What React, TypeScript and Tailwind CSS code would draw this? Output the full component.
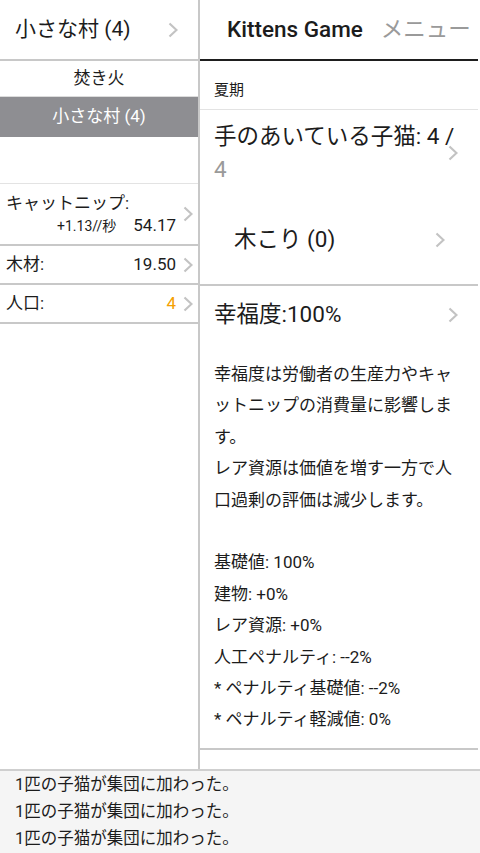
import React from "react";

const Chevron = ({ className = "" }: { className?: string }) => (
  <svg width="10" height="16" viewBox="0 0 10 16" className={"shrink-0 " + className}>
    <path d="M1.5 1.5 L8.5 8 L1.5 14.5" fill="none" stroke="#c3c3c3" strokeWidth="2.2" />
  </svg>
);

const descLines = [
  "幸福度は労働者の生産力やキャ",
  "ットニップの消費量に影響しま",
  "す。",
  "レア資源は価値を増す一方で人",
  "口過剰の評価は減少します。",
  "\u00a0",
  "基礎値: 100%",
  "建物: +0%",
  "レア資源: +0%",
  "人工ペナルティ: --2%",
  "* ペナルティ基礎値: --2%",
  "* ペナルティ軽減値: 0%",
];

export default function App() {
  return (
    <div className="w-[480px] h-[853px] flex flex-col bg-white text-[#1c1c1c] font-['Roboto','Noto_Sans_CJK_JP',sans-serif] overflow-hidden">
      <div className="flex flex-1 min-h-0">
        <aside className="w-[200px] shrink-0 border-r-2 border-[#c8c8c8] flex flex-col">
          <div className="h-[61px] shrink-0 border-b-2 border-[#c8c8c8] flex items-center justify-between pl-[15px] pr-[20px]">
            <span className="text-[21px]">小さな村 (4)</span>
            <Chevron />
          </div>
          <div className="h-[36px] shrink-0 border-b border-[#dcdcdc] flex items-center justify-center text-[17px]">
            焚き火
          </div>
          <div className="h-[40px] shrink-0 bg-[#8e8e92] text-white flex items-center justify-center text-[17px]">
            小さな村 (4)
          </div>
          <div className="h-[47px] shrink-0 border-b border-[#e3e3e3]"></div>
          <div className="h-[62px] shrink-0 border-b-2 border-[#c8c8c8] flex items-center pl-[6px] pr-[5px]">
            <div className="flex-1 flex flex-col">
              <div className="text-[17px] leading-[22px]">キャットニップ:</div>
              <div className="flex items-baseline justify-end gap-[17px] leading-[22px]">
                <span className="text-[14px]">+1.13//秒</span>
                <span className="text-[17px]">54.17</span>
              </div>
            </div>
            <Chevron className="ml-[7px]" />
          </div>
          <div className="h-[39px] shrink-0 border-b-2 border-[#c8c8c8] flex items-center pl-[6px] pr-[5px] text-[17px]">
            <span className="flex-1">木材:</span>
            <span>19.50</span>
            <Chevron className="ml-[7px]" />
          </div>
          <div className="h-[39px] shrink-0 border-b-2 border-[#c8c8c8] flex items-center pl-[6px] pr-[5px] text-[17px]">
            <span className="flex-1">人口:</span>
            <span className="text-[#f5a000]">4</span>
            <Chevron className="ml-[7px]" />
          </div>
        </aside>

        <main className="flex-1 flex flex-col pr-[2px] min-w-0">
          <div className="h-[61px] shrink-0 border-b-2 border-[#1e1e1e] flex items-center pl-[27px] gap-[18px]">
            <span className="text-[22.5px] font-medium">Kittens Game</span>
            <span className="text-[22.5px] text-[#9a9a9a]">メニュー</span>
          </div>
          <div className="h-[49px] shrink-0 border-b border-[#e3e3e3] flex items-end pl-[14px] pb-[9px]">
            <span className="text-[15px] leading-[20px]">夏期</span>
          </div>
          <div className="shrink-0 flex items-center pl-[14px] pr-[20px] py-[10px]">
            <div className="flex-1 min-w-0 text-[22.5px] leading-[33px] whitespace-nowrap">
              <div>手のあいている子猫: 4 /</div>
              <div className="text-[#9a9a9a]">4</div>
            </div>
            <Chevron />
          </div>
          <div className="h-[90px] shrink-0 border-b-2 border-[#c8c8c8] flex items-center pl-[34px] pr-[33px]">
            <span className="flex-1 text-[22.5px]">木こり (0)</span>
            <Chevron />
          </div>
          <div className="h-[57px] shrink-0 flex items-center pl-[14px] pr-[20px]">
            <span className="flex-1 text-[22.5px]">幸福度:100%</span>
            <Chevron />
          </div>
          <div className="shrink-0 pt-[16px] pb-[12px] pl-[14px] border-b-2 border-[#c8c8c8] text-[17px] leading-[31.4px] whitespace-nowrap">
            {descLines.map((l, i) => (
              <div key={i}>{l}</div>
            ))}
          </div>
          <div className="flex-1"></div>
        </main>
      </div>
      <div className="h-[84px] shrink-0 border-t-2 border-[#cfcfcf] bg-[#f5f5f5] pl-[15px] text-[16.5px] leading-[27px]">
        <div>1匹の子猫が集団に加わった。</div>
        <div>1匹の子猫が集団に加わった。</div>
        <div>1匹の子猫が集団に加わった。</div>
      </div>
    </div>
  );
}
